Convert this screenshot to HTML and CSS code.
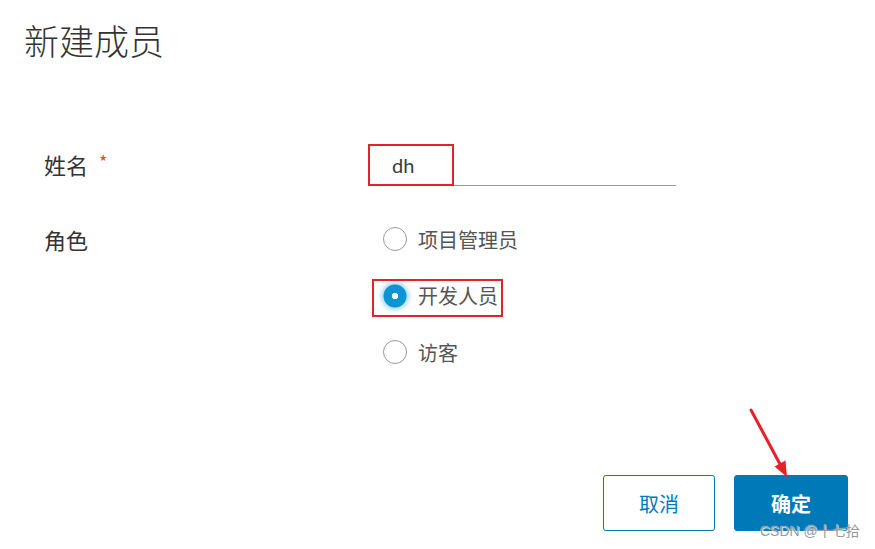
FILE: index.html
```html
<!DOCTYPE html>
<html lang="zh-CN">
<head>
<meta charset="utf-8">
<title>新建成员</title>
<link rel="stylesheet" href="styles.css">
</head>
<body>
<div class="dialog">
  <h1 class="title">新建成员</h1>
  <form class="form">
    <div class="row row-name">
      <label class="label">姓名 <span class="req">*</span></label>
      <div class="field">
        <span class="value">dh</span>
        <span class="mark mark-name"></span>
      </div>
    </div>
    <div class="row row-role">
      <label class="label">角色</label>
      <div class="options">
        <div class="option"><span class="radio"></span><span class="opt-text">项目管理员</span></div>
        <div class="option"><span class="radio checked"></span><span class="opt-text">开发人员</span><span class="mark mark-dev"></span></div>
        <div class="option"><span class="radio"></span><span class="opt-text">访客</span></div>
      </div>
    </div>
  </form>
  <div class="footer">
    <button class="btn btn-outline" type="button">取消</button>
    <button class="btn btn-primary" type="button">确定</button>
  </div>
  <svg class="arrow" width="875" height="549" viewBox="0 0 875 549">
    <line x1="751" y1="410" x2="781" y2="466" stroke="#e8202a" stroke-width="3" stroke-linecap="round"/>
    <polygon points="787,477 774.5,466.5 785.5,460.5" fill="#e8202a"/>
  </svg>
  <div class="watermark">CSDN @十七拾</div>
</div>
</body>
</html>
```
FILE: styles.css
```css
html, body {
  margin: 0;
  padding: 0;
  background: #fff;
}
body {
  font-family: "Noto Sans CJK SC", "Noto Sans", sans-serif;
  color: #333;
}
.dialog {
  position: relative;
  width: 875px;
  height: 549px;
  overflow: hidden;
}
.title {
  margin: 0;
  padding: 18px 0 0 24px;
  font-size: 35px;
  line-height: 44px;
  font-weight: 300;
  color: #333;
}
.form {
  margin-top: 83px;
  padding-left: 44px;
}
.row {
  display: flex;
  align-items: flex-start;
}
.label {
  width: 324px;
  font-size: 22px;
  color: #333;
}
.row-name .label {
  line-height: 38px;
}
.req {
  color: #e8492e;
  font-size: 18px;
  margin-left: 6px;
  vertical-align: top;
  line-height: 32px;
}
.field {
  position: relative;
  width: 308px;
  border-bottom: 1px solid #999;
  box-sizing: border-box;
  display: flex;
  align-items: center;
  padding-left: 24px;
  height: 41px;
}
.value {
  font-family: "Lato", "Noto Sans", sans-serif;
  font-size: 20px;
  font-weight: 400;
  color: #3a3a3a;
}
.mark {
  position: absolute;
  border: 2px solid #e8202a;
  box-sizing: border-box;
}
.mark-name {
  left: 0;
  top: -1px;
  width: 86px;
  height: 42px;
}
.row-role {
  margin-top: 36px;
}
.row-role .label {
  line-height: 34px;
}
.options {
  display: flex;
  flex-direction: column;
  gap: 22.5px;
  padding-left: 15px;
}
.option {
  position: relative;
  display: flex;
  align-items: center;
  height: 34px;
  gap: 11px;
}
.radio {
  width: 24px;
  height: 24px;
  border-radius: 50%;
  border: 1px solid #9a9a9a;
  box-sizing: border-box;
  background: #fff;
  flex: none;
}
.radio.checked {
  border: none;
  background: radial-gradient(circle, #fff 0 3px, #0a95d5 3.5px 11px, rgba(10,149,213,0.35) 12px, rgba(10,149,213,0) 14px);
  box-shadow: 0 0 4px 2px rgba(10,149,213,0.35);
}
.opt-text {
  font-size: 20px;
  color: #555;
}
.mark-dev {
  left: -11px;
  top: 0;
  width: 131px;
  height: 38px;
}
.footer {
  margin-top: 106px;
  display: flex;
  justify-content: flex-end;
  gap: 19px;
  padding-right: 27px;
}
.btn {
  width: 112px;
  height: 56px;
  border-radius: 3px;
  font-family: "Noto Sans CJK SC", sans-serif;
  font-size: 20px;
  border: 1px solid #0079b8;
  padding: 0;
}
.btn-outline {
  background: #fff;
  color: #0079b8;
}
.btn-primary {
  width: 114px;
  background: #0079b8;
  color: #fff;
  font-weight: 700;
}
.arrow {
  position: absolute;
  left: 0;
  top: 0;
  pointer-events: none;
}
.watermark {
  position: absolute;
  left: 760px;
  top: 520px;
  font-family: "Liberation Sans", "Noto Sans CJK SC", sans-serif;
  font-size: 14px;
  line-height: 22px;
  color: #9a9a9a;
  text-shadow: 0 0 1px #fff, 1px 1px 0 rgba(255,255,255,0.7);
}
```
